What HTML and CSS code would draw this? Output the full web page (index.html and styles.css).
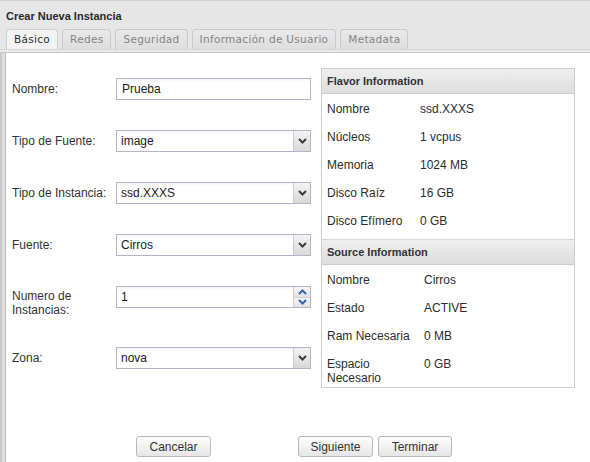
FILE: index.html
```html
<!DOCTYPE html>
<html lang="es">
<head>
<meta charset="utf-8">
<title>Crear Nueva Instancia</title>
<link rel="stylesheet" href="styles.css">
</head>
<body>
<div class="dialog">
  <div class="top">
    <div class="title">Crear Nueva Instancia</div>
    <ul class="tabs">
      <li class="tab active">Básico</li>
      <li class="tab">Redes</li>
      <li class="tab">Seguridad</li>
      <li class="tab">Información de Usuario</li>
      <li class="tab">Metadata</li>
    </ul>
    <div class="tabline"></div>
  </div>
  <div class="content">
    <div class="body">
      <div class="form">
        <div class="row">
          <div class="label">Nombre:</div>
          <div class="control input">Prueba</div>
        </div>
        <div class="row">
          <div class="label">Tipo de Fuente:</div>
          <div class="control select"><span class="val">image</span><span class="arrow"><svg width="9" height="6" viewBox="0 0 9 6"><polyline points="1,1 4.5,4.5 8,1" fill="none" stroke="#3c3c3c" stroke-width="2"/></svg></span></div>
        </div>
        <div class="row">
          <div class="label">Tipo de Instancia:</div>
          <div class="control select"><span class="val">ssd.XXXS</span><span class="arrow"><svg width="9" height="6" viewBox="0 0 9 6"><polyline points="1,1 4.5,4.5 8,1" fill="none" stroke="#3c3c3c" stroke-width="2"/></svg></span></div>
        </div>
        <div class="row">
          <div class="label">Fuente:</div>
          <div class="control select"><span class="val">Cirros</span><span class="arrow"><svg width="9" height="6" viewBox="0 0 9 6"><polyline points="1,1 4.5,4.5 8,1" fill="none" stroke="#3c3c3c" stroke-width="2"/></svg></span></div>
        </div>
        <div class="row">
          <div class="label label-two">Numero de Instancias:</div>
          <div class="control spin"><span class="val">1</span><span class="spinbtns"><span class="sb"><svg width="9" height="6" viewBox="0 0 9 6"><polyline points="1,5 4.5,1.5 8,5" fill="none" stroke="#3a62a6" stroke-width="2"/></svg></span><span class="sb"><svg width="9" height="6" viewBox="0 0 9 6"><polyline points="1,1 4.5,4.5 8,1" fill="none" stroke="#3a62a6" stroke-width="2"/></svg></span></span></div>
        </div>
        <div class="row">
          <div class="label">Zona:</div>
          <div class="control select"><span class="val">nova</span><span class="arrow"><svg width="9" height="6" viewBox="0 0 9 6"><polyline points="1,1 4.5,4.5 8,1" fill="none" stroke="#3c3c3c" stroke-width="2"/></svg></span></div>
        </div>
      </div>
      <div class="panel">
        <div class="phead">Flavor Information</div>
        <div class="ptable flavor">
          <div class="pr"><span>Nombre</span><span>ssd.XXXS</span></div>
          <div class="pr"><span>Núcleos</span><span>1 vcpus</span></div>
          <div class="pr"><span>Memoria</span><span>1024 MB</span></div>
          <div class="pr"><span>Disco Raíz</span><span>16 GB</span></div>
          <div class="pr"><span>Disco Efímero</span><span>0 GB</span></div>
        </div>
        <div class="phead phead-second">Source Information</div>
        <div class="ptable source">
          <div class="pr"><span>Nombre</span><span>Cirros</span></div>
          <div class="pr"><span>Estado</span><span>ACTIVE</span></div>
          <div class="pr"><span>Ram Necesaria</span><span>0 MB</span></div>
          <div class="pr pr-last"><span>Espacio<br>Necesario</span><span>0 GB</span></div>
        </div>
      </div>
    </div>
    <div class="actions">
      <button class="btn">Cancelar</button>
      <div class="right-btns">
        <button class="btn">Siguiente</button>
        <button class="btn btn-narrow">Terminar</button>
      </div>
    </div>
  </div>
</div>
</body>
</html>
```
FILE: styles.css
```css
* { box-sizing: border-box; }
html, body { margin: 0; padding: 0; }
body {
  width: 590px;
  height: 462px;
  overflow: hidden;
  background: #ffffff;
  font-family: "Liberation Sans", Arial, sans-serif;
  font-size: 12px;
  color: #333;
}
.dialog {
  height: 462px;
  display: flex;
  flex-direction: column;
}
.top {
  background: #e6e6e6;
  border-top: 1px solid #cfcfcf;
  padding-top: 8px;
}
.title {
  font-weight: bold;
  font-size: 11px;
  line-height: 14px;
  height: 14px;
  padding-left: 6px;
  color: #2a2a2a;
}
.tabs {
  list-style: none;
  margin: 6px 0 0 0;
  padding: 0 0 0 6px;
  display: flex;
  gap: 4px;
  height: 20px;
}
.tab {
  font-family: "DejaVu Sans", sans-serif;
  font-size: 10.5px;
  letter-spacing: 0.3px;
  color: #858585;
  height: 20px;
  line-height: 19px;
  padding: 0 7px;
  border: 1px solid #c9c9c9;
  border-bottom: none;
  border-radius: 4px 4px 0 0;
  background: linear-gradient(#e9e9e9, #dedede);
}
.tab.active {
  color: #2e2e2e;
  background: #f3f3f3;
  border-color: #d0d0d0;
}
.tabline {
  height: 4px;
  background: #ebebeb;
  border-top: 1px solid #d4d4d4;
  border-bottom: 1px solid #c6c6c6;
}
.content {
  flex: 1;
  padding-left: 6px;
  background:
    linear-gradient(to right, #c9c9c9 0 2px, #e0e0e0 2px 5px, #bababa 5px 6px) left top / 6px 100% no-repeat,
    #ffffff;
}
.body {
  display: flex;
  align-items: flex-start;
}
.form {
  width: 310px;
  padding: 25px 0 0 6px;
}
.row {
  display: flex;
  align-items: flex-start;
  margin-bottom: 30px;
}
.row:last-child { margin-bottom: 0; }
.label {
  width: 104px;
  padding-top: 4px;
  line-height: 14px;
}
.label-two { padding-top: 3px; }
.control {
  width: 195px;
  height: 22px;
  border: 1px solid #b2b5c6;
  background: linear-gradient(#f7f7f7, #ffffff 5px);
  display: flex;
  align-items: center;
  font-size: 12px;
  color: #222;
}
.input { padding-left: 5px; }
.val { flex: 1; padding-left: 4px; }
.arrow {
  width: 17px;
  height: 20px;
  border-left: 1px solid #cacaca;
  background: linear-gradient(#f3f3f3, #d9d9d9);
  display: flex;
  align-items: center;
  justify-content: center;
}
.spinbtns {
  width: 17px;
  height: 20px;
  border-left: 1px solid #cacaca;
  display: flex;
  flex-direction: column;
}
.sb {
  flex: 1;
  display: flex;
  align-items: center;
  justify-content: center;
  background: linear-gradient(#f6f6f6, #e2e2e2);
}
.sb + .sb { border-top: 1px solid #cfcfcf; }
.panel {
  margin-left: 5px;
  margin-top: 15px;
  width: 254px;
  border: 1px solid #cccccc;
  background: #ffffff;
}
.phead {
  height: 25px;
  line-height: 24px;
  padding-left: 5px;
  font-weight: bold;
  font-size: 11px;
  color: #333;
  background: linear-gradient(#efefef, #dddddd);
  border-bottom: 1px solid #cfcfcf;
}
.phead-second {
  height: 26px;
  border-top: 1px solid #d8d8d8;
}
.ptable { padding: 1px 0 4px 5px; }
.source { padding-bottom: 0; }
.pr {
  display: grid;
  grid-template-columns: 93px 1fr;
  height: 28px;
  line-height: 14px;
  padding-top: 7px;
  color: #2c2c2c;
}
.source .pr { grid-template-columns: 97px 1fr; }
.pr-last { height: 37px; }
.actions {
  display: flex;
  padding: 48px 0 0 130px;
}
.btn {
  width: 75px;
  height: 21px;
  padding: 0;
  font-family: "Liberation Sans", Arial, sans-serif;
  font-size: 12px;
  color: #333;
  border: 1px solid #b8b8b8;
  border-radius: 3px;
  background: linear-gradient(#fdfdfd, #e6e6e6);
}
.right-btns {
  display: flex;
  gap: 5px;
  margin-left: 87px;
}
.btn-narrow { width: 74px; }
```
